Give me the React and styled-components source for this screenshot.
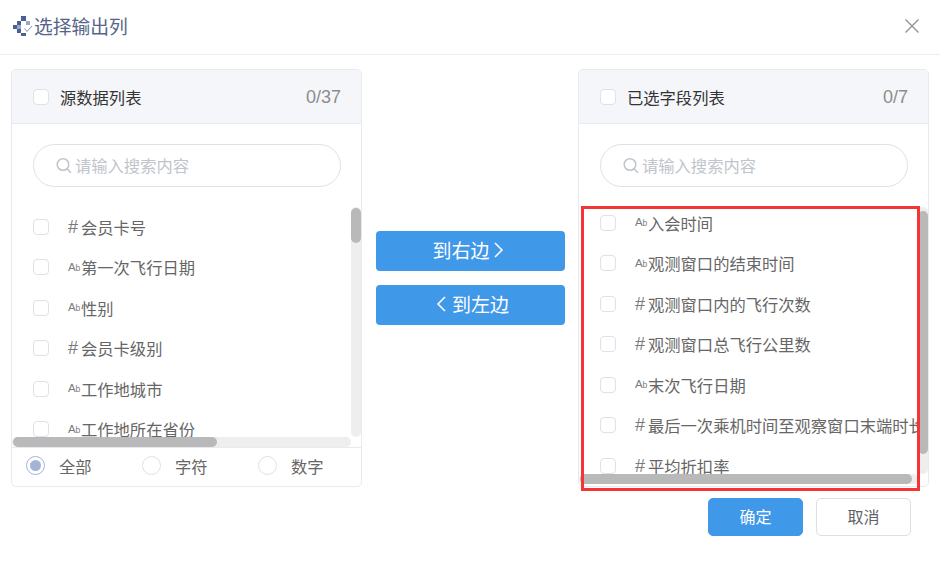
import React, { useEffect, useRef } from "react";
import styled, { createGlobalStyle } from "styled-components";

const FONT = `"Noto Sans CJK SC", "Noto Sans", "Liberation Sans", sans-serif`;

const Global = createGlobalStyle`
  html, body { margin: 0; padding: 0; background: #fff; }
  * { box-sizing: border-box; }
  #root { width: 940px; height: 569px; overflow: hidden; font-family: ${FONT}; }
`;

const Dialog = styled.div`
  width: 940px;
  height: 569px;
  display: flex;
  flex-direction: column;
  background: #fff;
`;

const Header = styled.header`
  height: 55px;
  flex: none;
  display: flex;
  align-items: center;
  justify-content: space-between;
  padding: 0 20px 2px 13px;
  border-bottom: 1px solid #eceef0;
`;

const TitleGroup = styled.div`
  display: flex;
  align-items: center;
  gap: 1px;
`;

const Title = styled.h1`
  margin: 0;
  font-size: 18.8px;
  line-height: 26px;
  font-weight: 400;
  color: #556488;
`;

const Body = styled.div`
  display: grid;
  grid-template-columns: 351px 216px 351px;
  padding: 14px 11px 0;
  height: 432px;
  flex: none;
`;

const Panel = styled.section`
  height: 418px;
  display: flex;
  flex-direction: column;
  border: 1px solid #e8eaf0;
  border-radius: 5px;
`;

const PanelHead = styled.div`
  height: 54px;
  flex: none;
  display: flex;
  align-items: center;
  padding: 0 20px 0 21px;
  background: #f5f6fa;
  border-bottom: 1px solid #e8eaf0;
  border-radius: 4px 4px 0 0;
`;

const PanelTitle = styled.span`
  flex: 1;
  margin-left: 11px;
  font-size: 16.3px;
  line-height: 22px;
  color: #333;
`;

const Count = styled.span`
  font-family: "Liberation Sans", sans-serif;
  font-size: 18px;
  line-height: 22px;
  color: #8c8c8c;
`;

const Box = styled.span`
  display: block;
  flex: none;
  width: 16px;
  height: 16px;
  background: #fff;
  border: 1px solid #dfe1ea;
  border-radius: 4px;
`;

const SearchBox = styled.label`
  flex: none;
  width: 308px;
  height: 43px;
  margin: 20px 0 20px 21px;
  display: flex;
  align-items: center;
  gap: 3px;
  padding: 0 12px 0 22px;
  border: 1px solid #dfe1ea;
  border-radius: 22px;
`;

const SearchInput = styled.input`
  flex: 1;
  min-width: 0;
  border: 0;
  outline: 0;
  padding: 0 0 2px;
  background: transparent;
  font: 16.3px/22px ${FONT};
  color: #333;
  &::placeholder { color: #c0c4cc; opacity: 1; }
`;

const ListWrap = styled.div`
  position: relative;
  flex: 1;
  min-height: 0;
  margin-bottom: ${(p) => p.$gap}px;
`;

const Scroller = styled.div`
  height: 100%;
  overflow: hidden;
`;

const Rows = styled.ul`
  margin: -0.5px 0 0;
  padding: 0 5px 9px 21px;
  list-style: none;
  width: max-content;
`;

const Row = styled.li`
  height: 40.5px;
  display: flex;
  align-items: center;
  white-space: nowrap;
  font-size: 16.3px;
  line-height: 22px;
  color: #666;
`;

const TypeMark = styled.span`
  flex: none;
  width: 13px;
  margin-left: 19px;
  font-family: "Liberation Sans", sans-serif;
  color: #7a7a7a;
  white-space: nowrap;
  line-height: 16px;
`;

const Hash = styled(TypeMark)`
  font-size: 18px;
`;

const Ab = styled(TypeMark)`
  font-size: 11.5px;
  letter-spacing: -0.2px;
  & > small { font-size: 8.5px; }
`;

const VTrack = styled.div`
  position: absolute;
  top: 0;
  right: 0;
  bottom: 10px;
  width: 10px;
  background: #eeeeee;
  border-radius: 5px;
`;

const VThumb = styled.div`
  margin-top: ${(p) => p.$top}px;
  height: ${(p) => p.$size}px;
  background: #b9b9b9;
  border-radius: 5px;
`;

const HTrack = styled.div`
  position: absolute;
  left: 0;
  right: 10px;
  bottom: 0;
  height: 10px;
  background: #eeeeee;
  border-radius: 5px;
`;

const HThumb = styled.div`
  margin-left: ${(p) => p.$left}px;
  width: ${(p) => p.$size}px;
  height: 10px;
  background: #b9b9b9;
  border-radius: 5px;
`;

const Filter = styled.div`
  flex: none;
  height: 39px;
  display: flex;
  align-items: center;
  padding: 0 0 3px 14px;
  border-top: 1px solid #e8eaf0;
`;

const FilterOption = styled.label`
  flex: none;
  width: 116px;
  display: flex;
  align-items: center;
  gap: 14px;
  font-size: 16.3px;
  line-height: 22px;
  color: #666;
`;

const Radio = styled.span`
  width: 19px;
  height: 19px;
  flex: none;
  display: flex;
  align-items: center;
  justify-content: center;
  border: 1px solid ${(p) => (p.$on ? "#a3b4d8" : "#dfe1ea")};
  border-radius: 50%;
  &::after {
    content: "";
    width: 11px;
    height: 11px;
    border-radius: 50%;
    background: ${(p) => (p.$on ? "#a3b4d8" : "transparent")};
  }
`;

const Transfer = styled.div`
  display: flex;
  flex-direction: column;
  gap: 14px;
  padding: 162px 13px 0 14px;
`;

const Primary = styled.button`
  height: 40px;
  display: flex;
  align-items: center;
  justify-content: center;
  gap: ${(p) => (p.$leading ? 6 : 4)}px;
  padding: 0 ${(p) => (p.$leading ? 0 : 5)}px 2px ${(p) => (p.$leading ? 4 : 0)}px;
  border: 0;
  border-radius: 4px;
  background: #3f98e8;
  color: #fff;
  font: 19px/24px ${FONT};
`;

const Footer = styled.footer`
  display: flex;
  justify-content: flex-end;
  gap: 13px;
  padding: 11px 29px 0 0;
`;

const ActionButton = styled.button`
  width: 95px;
  height: 38px;
  padding: 0 0 2px;
  border: 1px solid ${(p) => (p.$primary ? "#3f98e8" : "#dcdfe6")};
  border-radius: 5px;
  background: ${(p) => (p.$primary ? "#3f98e8" : "#fff")};
  color: ${(p) => (p.$primary ? "#fff" : "#606266")};
  font: 16px/22px ${FONT};
`;

const CloseButton = styled.button`
  display: flex;
  padding: 0;
  border: 0;
  background: none;
`;

const Highlight = styled.div`
  position: absolute;
  top: -1px;
  left: 2px;
  width: 339px;
  height: 285px;
  border: 3px solid #f53535;
  pointer-events: none;
`;

const Logo = () => (
  <svg width="20" height="20" viewBox="0 0 20 20" aria-hidden="true">
    <rect x="8" y="0" width="5" height="5" fill="#4a5f94" />
    <rect x="4" y="5" width="4" height="4" fill="#4a5f94" />
    <rect x="13" y="5" width="4" height="4" fill="#9aa7c6" />
    <rect x="0" y="9" width="4" height="4" fill="#4a5f94" />
    <rect x="4" y="9" width="4" height="4" fill="#9aa7c6" />
    <rect x="4" y="13" width="4" height="4" fill="#4a5f94" />
    <rect x="8" y="17" width="5" height="3" fill="#4a5f94" />
    <path d="M11.5 12.5 14 15.5 19 10" fill="none" stroke="#7e8db2" strokeWidth="1" />
  </svg>
);

const CloseIcon = () => (
  <svg width="16" height="16" viewBox="0 0 16 16" aria-hidden="true">
    <path d="M1.5 1.5 14.5 14.5M14.5 1.5 1.5 14.5" stroke="#909399" strokeWidth="1.4" />
  </svg>
);

const SearchIcon = () => (
  <svg width="16" height="17" viewBox="0 0 16 17" fill="none" stroke="#c0c4cc" strokeWidth="1.5" aria-hidden="true">
    <circle cx="7" cy="7.5" r="5.8" />
    <path d="M11.2 11.8 14.6 15.4" strokeLinecap="round" />
  </svg>
);

const Chevron = ({ left }) => (
  <svg width="10" height="16" viewBox="0 0 10 16" fill="none" stroke="#fff" strokeWidth="1.5" aria-hidden="true">
    <path d={left ? "M9 1 2 8 9 15" : "M1 1 8 8 1 15"} />
  </svg>
);

const Mark = ({ type }) =>
  type === "n" ? (
    <Hash>#</Hash>
  ) : (
    <Ab>
      A<small>b</small>
    </Ab>
  );

const source = [
  ["n", "会员卡号"], ["s", "第一次飞行日期"], ["s", "性别"], ["n", "会员卡级别"], ["s", "工作地城市"], ["s", "工作地所在省份"],
];

const selected = [
  ["s", "入会时间"], ["s", "观测窗口的结束时间"], ["n", "观测窗口内的飞行次数"], ["n", "观测窗口总飞行公里数"],
  ["s", "末次飞行日期"], ["n", "最后一次乘机时间至观察窗口末端时长"], ["n", "平均折扣率"],
];

const FieldRows = ({ items }) => (
  <Rows>
    {items.map(([type, name]) => (
      <Row key={name}>
        <Box />
        <Mark type={type} />
        {name}
      </Row>
    ))}
  </Rows>
);

const Search = () => (
  <SearchBox>
    <SearchIcon />
    <SearchInput placeholder="请输入搜索内容" />
  </SearchBox>
);

export default function App() {
  const rightList = useRef(null);
  useEffect(() => {
    rightList.current.scrollTop = 4;
  }, []);

  return (
    <Dialog>
      <Global />
      <Header>
        <TitleGroup>
          <Logo />
          <Title>选择输出列</Title>
        </TitleGroup>
        <CloseButton aria-label="关闭">
          <CloseIcon />
        </CloseButton>
      </Header>
      <Body>
        <Panel>
          <PanelHead>
            <Box />
            <PanelTitle>源数据列表</PanelTitle>
            <Count>0/37</Count>
          </PanelHead>
          <Search />
          <ListWrap $gap={0}>
            <Scroller>
              <FieldRows items={source} />
            </Scroller>
            <VTrack>
              <VThumb $top={1} $size={35} />
            </VTrack>
            <HTrack>
              <HThumb $left={1} $size={204} />
            </HTrack>
          </ListWrap>
          <Filter>
            <FilterOption>
              <Radio $on />
              全部
            </FilterOption>
            <FilterOption>
              <Radio />
              字符
            </FilterOption>
            <FilterOption>
              <Radio />
              数字
            </FilterOption>
          </Filter>
        </Panel>
        <Transfer>
          <Primary>
            到右边
            <Chevron />
          </Primary>
          <Primary $leading>
            <Chevron left />
            到左边
          </Primary>
        </Transfer>
        <Panel>
          <PanelHead>
            <Box />
            <PanelTitle>已选字段列表</PanelTitle>
            <Count>0/7</Count>
          </PanelHead>
          <Search />
          <ListWrap $gap={2}>
            <Scroller ref={rightList}>
              <FieldRows items={selected} />
            </Scroller>
            <VTrack>
              <VThumb $top={4} $size={243} />
            </VTrack>
            <HTrack>
              <HThumb $left={1} $size={332} />
            </HTrack>
            <Highlight />
          </ListWrap>
        </Panel>
      </Body>
      <Footer>
        <ActionButton $primary>确定</ActionButton>
        <ActionButton>取消</ActionButton>
      </Footer>
    </Dialog>
  );
}
